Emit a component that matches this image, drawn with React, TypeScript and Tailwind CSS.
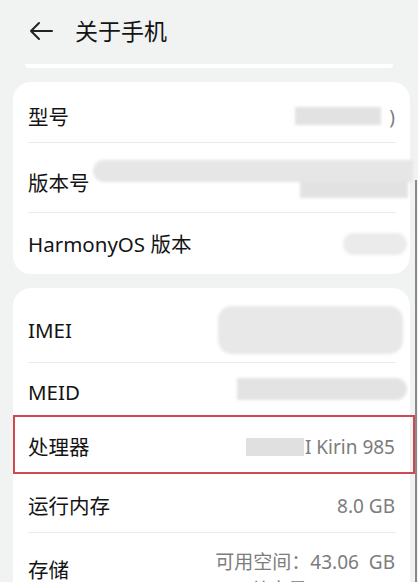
import React from 'react';

const font = { fontFamily: '"Noto Sans", "Noto Sans CJK SC", sans-serif' };

const Blur = ({ className }: { className: string }) => (
  <div className={`absolute bg-[#e2e2e2] blur-[1.5px] ${className}`} />
);

const Row = ({
  label,
  h,
  divider = true,
  shift = '',
  children,
}: {
  label: string;
  h: string;
  divider?: boolean;
  shift?: string;
  children?: React.ReactNode;
}) => (
  <div className={`relative flex items-center justify-between px-[15px] ${h}`}>
    <span className={`text-[20.5px] leading-[28px] text-[#141414] ${shift}`}>{label}</span>
    <div className="text-right text-[19px] leading-[28px] text-[#7c7c7c]">{children}</div>
    {divider && <div className="absolute bottom-0 left-[15px] right-[14px] h-px bg-[#e9e9e9]" />}
  </div>
);

export default function App() {
  return (
    <div className="relative h-[582px] w-[418px] overflow-hidden bg-[#f1f2f2]" style={font}>
      {/* header */}
      <div className="flex h-[64px] items-center pl-[28px] pb-[2px]">
        <svg width="26" height="20" viewBox="0 0 26 20" fill="none" stroke="#222" strokeWidth="2" strokeLinecap="round" strokeLinejoin="round">
          <path d="M24 10H3M11 2L3 10l8 8" />
        </svg>
        <span className="ml-[21px] text-[23px] text-[#141414]">关于手机</span>
      </div>
      <div className="mx-[25px] h-[4px] rounded-b bg-white" />

      {/* card 1 */}
      <div className="relative mx-[13px] mt-[14px] w-[397px] rounded-[18px] bg-white">
        <Row label="型号" h="h-[61px]" shift="translate-y-[4px]">
          <div className="relative h-[28px] w-[100px] translate-y-[4px]">
            <Blur className="left-0 top-[4px] h-[18px] w-[86px]" />
            <span className="absolute right-0 top-0">)</span>
          </div>
        </Row>
        <Row label="版本号" h="h-[70px]" shift="translate-y-[5px]">
          <div className="h-[40px] w-[200px]" />
        </Row>
        <Blur className="left-[80px] top-[78px] h-[22px] w-[320px] rounded-l-full bg-[#e6e6e6]" />
        <Blur className="left-[287px] top-[98px] h-[18px] w-[108px]" />
        <Row label="HarmonyOS 版本" h="h-[61px]" divider={false}>
          <div className="h-[22px] w-[64px] translate-x-[12px] rounded-full bg-[#ebebeb] blur-[1.5px]" />
        </Row>
      </div>

      {/* card 2 */}
      <div className="relative mx-[13px] mt-[14px] w-[397px] rounded-t-[18px] bg-white pt-[8px]">
        <Row label="IMEI" h="h-[67px]">
          <div className="h-[48px] w-[185px] translate-x-[8px] rounded-[14px] bg-[#e8e8e8] blur-[1.5px]" />
        </Row>
        <Row label="MEID" h="h-[52px]" divider={false} shift="translate-y-[3px]">
          <div className="h-[22px] w-[170px] translate-x-[12px] rounded-r-full bg-[#e3e3e3] blur-[1.5px]" />
        </Row>
        <div className="relative -mr-[5px] flex h-[59px] items-center justify-between border-2 border-[#cc4a50] pl-[13px] pr-[18px] pt-[5px]">
          <span className="text-[20.5px] text-[#141414]">处理器</span>
          <div className="flex items-center text-[19px] text-[#7c7c7c]">
            <div className="mr-[1px] h-[18px] w-[58px] bg-[#e0e0e0]" />
            <span>I Kirin 985</span>
          </div>
        </div>
        <Row label="运行内存" h="h-[59px]" shift="translate-y-[2px]">
          <span className="inline-block translate-y-[2px]">8.0 GB</span>
        </Row>
        <Row label="存储" h="h-[72px]" divider={false} shift="translate-y-[1px]">
          <div className="pt-[14px]">
            <div>可用空间：43.06&nbsp; GB</div>
            <div>总容量：128&nbsp; GB</div>
          </div>
        </Row>
      </div>

      {/* scrollbar */}
      <div className="absolute right-[1px] top-[180px] h-[402px] w-[2px] bg-[#8a8a8a]" />
    </div>
  );
}
